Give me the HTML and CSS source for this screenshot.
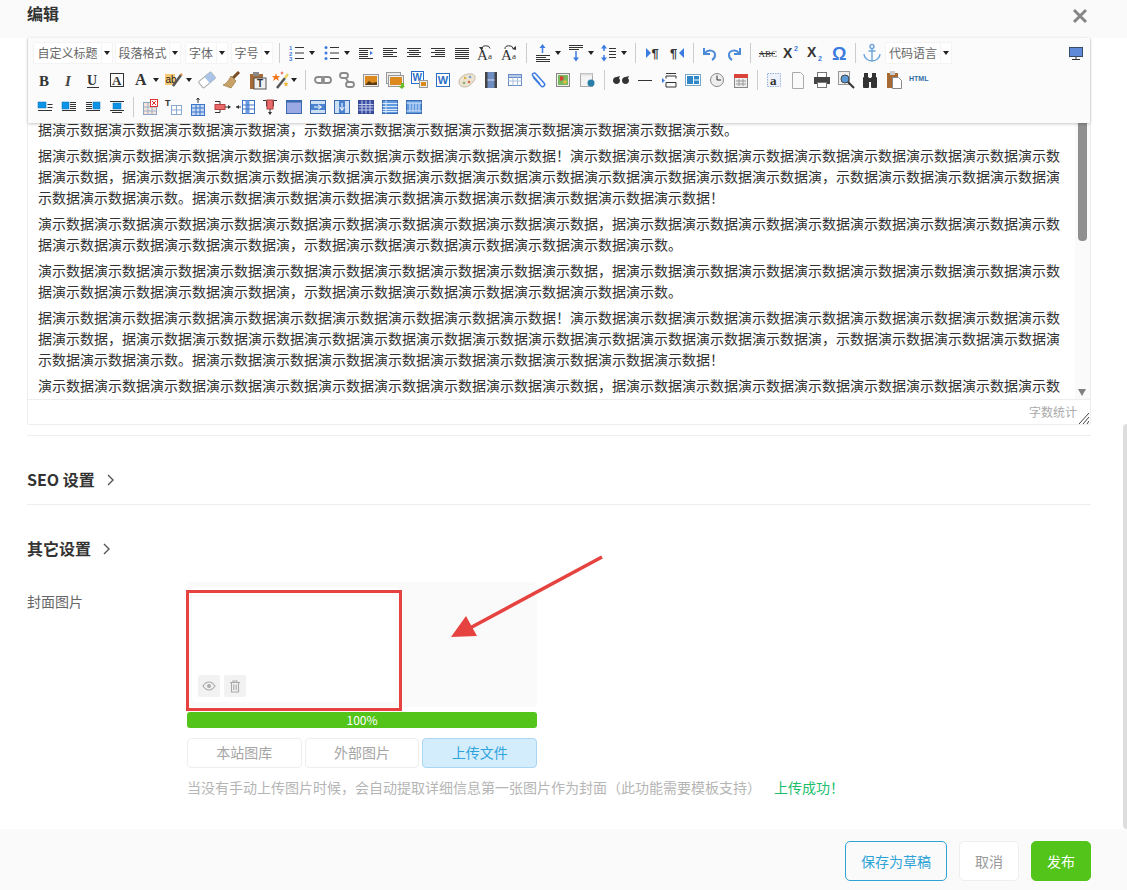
FILE: index.html
```html
<!DOCTYPE html>
<html lang="zh-CN">
<head>
<meta charset="utf-8">
<title>编辑</title>
<link rel="stylesheet" href="styles.css">
</head>
<body>
<header class="head">
  <h1 class="head-title">编辑</h1>
  <svg class="close" viewBox="0 0 16 16"><path d="M2 2l12 12M14 2L2 14"/></svg>
</header>
<main class="main">
  <section class="editor">
    <div class="toolbar">
      <div class="row">
        <div class="combo w1"><span class="combo-label">自定义标题</span><span class="caret"></span></div>
        <div class="combo w2"><span class="combo-label">段落格式</span><span class="caret"></span></div>
        <div class="combo w3"><span class="combo-label">字体</span><span class="caret"></span></div>
        <div class="combo w4"><span class="combo-label">字号</span><span class="caret"></span></div>
        <span class="sep sep12"></span>
        <svg class="i" viewBox="0 0 20 20"><text class="num" x="2" y="6.5">1</text><text class="num" x="2" y="12.5">2</text><text class="num" x="2" y="18">3</text><path class="s" d="M8 4.5h9M8 10h9M8 15.5h9"/></svg><span class="caret wide"></span>
        <svg class="i" viewBox="0 0 20 20"><circle class="fb" cx="4" cy="4.5" r="1.5"/><circle class="fb" cx="4" cy="10" r="1.5"/><circle class="fb" cx="4" cy="15.5" r="1.5"/><path class="s" d="M8 4.5h9M8 10h9M8 15.5h9"/></svg><span class="caret mid"></span>
        <svg class="i" viewBox="0 0 20 20"><path class="s" d="M3 5.5h14M3 7.5h9M3 9.5h9M3 11.5h9M3 13.5h9M3 15.5h14"/><path class="fb" d="M14 8l3 2-3 2z"/></svg>
        <svg class="i" viewBox="0 0 20 20"><path class="s" d="M3 5.5h14M3 7.5h10M3 9.5h14M3 11.5h10M3 13.5h14"/></svg>
        <svg class="i" viewBox="0 0 20 20"><path class="s" d="M3 5.5h14M5 7.5h10M3 9.5h14M5 11.5h10M3 13.5h14"/></svg>
        <svg class="i" viewBox="0 0 20 20"><path class="s" d="M3 5.5h14M7 7.5h10M3 9.5h14M7 11.5h10M3 13.5h14"/></svg>
        <svg class="i" viewBox="0 0 20 20"><path class="s" d="M3 5.5h14M3 7.5h14M3 9.5h14M3 11.5h14M3 13.5h14M3 15.5h14"/></svg>
        <svg class="i" viewBox="0 0 20 20"><text class="serif" x="1" y="17" font-size="15">A</text><text class="serif" x="12" y="16" font-size="9">a</text><path class="s" d="M6 6a4 3 0 0 1 8-.5"/><path class="f" d="M3 4l4 0-1 4z"/></svg>
        <svg class="i" viewBox="0 0 20 20"><text class="serif" x="1" y="17" font-size="15">A</text><text class="serif" x="12" y="16" font-size="9">a</text><path class="s" d="M5 6a4 3 0 0 1 8-.5"/><path class="f" d="M16 3l0 4-4-1z"/></svg>
        <span class="sep"></span>
        <svg class="i" viewBox="0 0 20 20"><path class="sb" d="M9.5 4v6"/><path class="fb" d="M9.5 1l3 4h-6z"/><path class="s" d="M3 12.5h14M3 14.5h10M3 16.5h14M3 18.5h14"/></svg><span class="caret"></span>
        <svg class="i" viewBox="0 0 20 20"><path class="s" d="M3 2.5h14M3 4.5h14M3 6.5h10"/><path class="sb" d="M10 8v7"/><path class="fb" d="M10 18.500l3-4H7z"/></svg><span class="caret"></span>
        <svg class="i" viewBox="0 0 20 20"><path class="sb" d="M5 5v3M5 12v3"/><path class="fb" d="M5 1.500l3 4H2zM5 18.500l3-4H2z"/><path class="s" d="M10 5.500h7M10 8.500h7M10 11.500h7M10 14.500h7"/></svg><span class="caret"></span>
        <span class="sep sep11"></span>
        <svg class="i" viewBox="0 0 20 20"><path class="fb" d="M3 5l5 5-5 5z"/><text class="sans-b" x="8.500" y="15" font-size="13">¶</text></svg>
        <svg class="i" viewBox="0 0 20 20"><text class="sans-b" x="3" y="15" font-size="13">¶</text><path class="fb" d="M17 5l-5 5 5 5z"/></svg>
        <span class="sep"></span>
        <svg class="i" viewBox="0 0 20 20"><path class="arrow-s" d="M4 5v6h6M5 10c3-4 10-3 10 2 0 2-1 4-3 5"/></svg>
        <svg class="i" viewBox="0 0 20 20"><path class="arrow-s" d="M16 5v6h-6M15 10c-3-4-10-3-10 2 0 2 1 4 3 5"/></svg>
        <span class="sep"></span>
        <svg class="i" viewBox="0 0 20 20"><text class="serif" x="1.500" y="13.500" font-size="9">ABC</text><path class="s" d="M2 10.500h16"/></svg>
        <svg class="i" viewBox="0 0 20 20"><text class="sans-b" x="2" y="15" font-size="14">X</text><text class="tiny-b" x="13" y="8">2</text></svg>
        <svg class="i" viewBox="0 0 20 20"><text class="sans-b" x="2" y="14" font-size="14">X</text><text class="tiny-b" x="13" y="18">2</text></svg>
        <svg class="i" viewBox="0 0 20 20"><text class="omega" x="3" y="16.500" font-size="18">Ω</text></svg>
        <span class="sep"></span>
        <svg class="i" viewBox="0 0 20 20"><circle class="anchor" cx="10" cy="3.500" r="2"/><path class="anchor" d="M10 5.500V18M6.500 8h7M2 11c0 4 4 7 8 7s8-3 8-7"/></svg>
        <div class="combo w5"><span class="combo-label">代码语言</span><span class="caret"></span></div>
        <svg class="i end" viewBox="0 0 20 20"><rect x="3.500" y="4.500" width="13" height="9" fill="#5f8ad8" stroke="#3a4a6a"/><path class="s" d="M10 14v2M6 16.500h8"/></svg>
      </div>
      <div class="row">
        <svg class="i" viewBox="0 0 20 20"><text class="serif-b" x="4" y="15.500" font-size="15">B</text></svg>
        <svg class="i" viewBox="0 0 20 20"><text class="serif-i" x="6" y="15.500" font-size="15">I</text></svg>
        <svg class="i" viewBox="0 0 20 20"><text class="serif-b" x="4" y="14.500" font-size="14">U</text><path class="s" d="M4 17.500h12"/></svg>
        <svg class="i" viewBox="0 0 20 20"><rect class="s" x="3.500" y="3.500" width="13" height="13"/><text class="serif-b" x="5" y="15" font-size="13">A</text></svg>
        <svg class="i" viewBox="0 0 20 20"><text class="serif-b" x="4" y="15" font-size="16">A</text></svg><span class="caret"></span>
        <svg class="i" viewBox="0 0 20 20"><rect x="1" y="4" width="10" height="11" fill="#f5c873"/><text class="sans" x="1.500" y="13" font-size="10">ab</text><path d="M9 16L17 5" stroke="#555" stroke-width="2.500"/><path d="M17 5l1-1" stroke="#e09030" stroke-width="2.500"/></svg><span class="caret"></span>
        <svg class="i" viewBox="0 0 20 20"><g transform="rotate(-40 10 10)"><rect x="2" y="6" width="16" height="8" rx="1" fill="#fff" stroke="#aaa"/><rect x="10" y="6" width="8" height="8" fill="#a9c4e8"/></g></svg>
        <svg class="i" viewBox="0 0 20 20"><path d="M12 8l6-6" stroke="#7a4a20" stroke-width="3"/><path d="M10 6l5 5-5 7-8-3c3-1 6-5 8-9z" fill="#c8a266" stroke="#8c6a36" stroke-width=".6"/></svg>
        <svg class="i shift" viewBox="0 0 20 20"><rect x="3" y="4" width="13" height="15" fill="#a86a34"/><rect x="6" y="2" width="6" height="4" fill="#888"/><rect x="7" y="8" width="12" height="11" fill="#f0f0f0" stroke="#555"/><text class="sans-b" x="10" y="17" font-size="10">T</text></svg>
        <svg class="i shift" viewBox="0 0 20 20"><path d="M6 18l8-10" stroke="#555" stroke-width="2.500"/><path d="M14 8l3-4" stroke="#f0d060" stroke-width="2.500"/><path d="M5 3l1 3h3L7 8l1 3-3-2-3 2 1-3-2-2h3z" fill="#f07a20"/><path d="M15 11l.6 2 2 .2-1.500 1.200.5 2-1.600-1-1.600 1 .5-2-1.400-1.200 2-.2z" fill="#f0b030"/><path d="M11 1l.5 1.500L13 3l-1.500.5L11 5l-.5-1.500L9 3l1.500-.5z" fill="#e04030"/></svg><span class="caret"></span>
        <span class="sep sep11"></span>
        <svg class="i" viewBox="0 0 20 20"><rect class="chain" x="2" y="7" width="9" height="6" rx="3"/><rect class="chain" x="9" y="7" width="9" height="6" rx="3"/></svg>
        <svg class="i" viewBox="0 0 20 20"><rect class="chain" x="3" y="3" width="8" height="5" rx="2.500"/><rect class="chain" x="9" y="12" width="8" height="5" rx="2.500"/><path class="chain" d="M9 8c0 2 2 2 2 4"/></svg>
        <svg class="i" viewBox="0 0 20 20"><rect x="2.500" y="4.500" width="15" height="12" fill="#eee" stroke="#999"/><rect x="4" y="6" width="12" height="9" fill="#dc8a1e"/><path d="M4 15l4-4 3 2 5-1v3z" fill="#5a3a10"/></svg>
        <svg class="i" viewBox="0 0 20 20"><rect x="1.500" y="2.500" width="14" height="11" fill="#eee" stroke="#999"/><rect x="3.500" y="5.500" width="15" height="11" fill="#eee" stroke="#999"/><rect x="5" y="7" width="12" height="8" fill="#dc8a1e"/><path d="M16 13h3v3h-3z" fill="#6ab82c"/><path d="M13 16l4 3 3-3z" fill="#6ab82c"/></svg>
        <svg class="i" viewBox="0 0 20 20"><rect x="2.500" y="1.500" width="12" height="12" fill="#fff" stroke="#2a6ec8"/><text class="word" x="3.500" y="11" font-size="10">W</text><rect x="10.500" y="10.500" width="8" height="7" fill="#eee" stroke="#999"/><rect x="12" y="12" width="5" height="4" fill="#dc8a1e"/></svg>
        <svg class="i" viewBox="0 0 20 20"><rect x="3.500" y="3.500" width="13" height="13" fill="#fff" stroke="#2a6ec8"/><text class="word" x="4.800" y="14" font-size="11">W</text></svg>
        <svg class="i" viewBox="0 0 20 20"><path d="M2 12c0-6 8-9 13-8 4 1 4 5 1 8-2 2-4 5-8 5-3 0-6-1-6-5z" fill="#ece4d0" stroke="#c4bca8"/><circle cx="8" cy="8" r="1.300" fill="#d9b04a"/><circle cx="13" cy="7" r="1.300" fill="#7aa0d0"/><circle cx="12" cy="12" r="1.300" fill="#d06a4a"/><circle cx="7" cy="13" r="1.300" fill="#8ab070"/></svg>
        <svg class="i" viewBox="0 0 20 20"><rect x="4" y="2" width="12" height="16" fill="#6f8dc0"/><rect x="4" y="2" width="2.500" height="16" fill="#444"/><rect x="13.500" y="2" width="2.500" height="16" fill="#444"/><path d="M6.500 10h7" stroke="#dde"/></svg>
        <svg class="i" viewBox="0 0 20 20"><rect x="3.500" y="4.500" width="13" height="11" fill="#fff" stroke="#6a8fc8"/><rect x="3.500" y="4.500" width="13" height="3" fill="#b8cbe6" stroke="#6a8fc8"/><path d="M3.500 11h13M8 7.500v8M12.500 7.500v8" stroke="#a8c0e0"/></svg>
        <svg class="i" viewBox="0 0 20 20"><path d="M4 7l8 9c2 2 5-1 3-3L7 4C5 2 2 4 4 6l7 8" fill="none" stroke="#3c7ce0" stroke-width="1.500"/></svg>
        <svg class="i" viewBox="0 0 20 20"><rect x="3.500" y="3.500" width="13" height="13" fill="#f0f0e8" stroke="#888"/><rect x="5" y="5" width="10" height="10" fill="#7ab860"/><path d="M7 6l4 1-1 3-3 1z" fill="#d84030"/><path d="M11 10l3 1-1 3-3-1z" fill="#e0c040"/></svg>
        <svg class="i" viewBox="0 0 20 20"><rect x="3.500" y="3.500" width="12" height="13" fill="#f4f4f4" stroke="#aaa"/><rect x="3.500" y="3.500" width="12" height="2" fill="#ddd"/><circle cx="14" cy="13" r="3.500" fill="#2a7fa8"/></svg>
        <span class="sep sep10"></span>
        <svg class="i" viewBox="0 0 20 20"><path class="f" d="M5.500 7c-2 0-3.500 1.500-3.500 3.500S3.500 14 5.500 14 9 12.500 9 10.500c0-1-.5-1.500-1-2L9 6zM14.500 7c-2 0-3.500 1.500-3.500 3.500s1.500 3.500 3.500 3.500 3.500-1.500 3.500-3.500c0-1-.5-1.500-1-2l1-2.500z"/></svg>
        <svg class="i" viewBox="0 0 20 20"><path class="s" d="M3 10.500h14"/></svg>
        <svg class="i" viewBox="0 0 20 20"><path class="s" d="M7 3.500h10M7 8.500V6h10v2.500M7 12.500h10V17H7z"/><path class="fb" d="M3 8v5l3-2.500z"/></svg>
        <svg class="i" viewBox="0 0 20 20"><rect x="2.500" y="4.500" width="15" height="11" fill="#fff" stroke="#7aa4c4"/><rect x="4" y="6" width="6" height="8" fill="#2f86c8"/><rect x="11" y="6" width="5" height="3.500" fill="#2f86c8"/><rect x="11" y="10.500" width="5" height="3.500" fill="#2f86c8"/></svg>
        <svg class="i" viewBox="0 0 20 20"><circle cx="10" cy="10" r="6.500" fill="#eee" stroke="#888"/><path class="s" d="M10 5.500V10h4"/></svg>
        <svg class="i" viewBox="0 0 20 20"><rect x="3.500" y="4.500" width="13" height="13" fill="#eee" stroke="#888"/><rect x="3" y="4" width="14" height="4" fill="#d9433a"/><path d="M5 11h10M5 14h10M8 9v7M12 9v7" stroke="#999"/></svg>
        <span class="sep"></span>
        <svg class="i" viewBox="0 0 20 20"><rect x="3.500" y="3.500" width="13" height="13" fill="#eef2fc" stroke="#9ab4e0" stroke-dasharray="1.500 1"/><text class="serif-b" x="6" y="14.500" font-size="13">a</text></svg>
        <svg class="i" viewBox="0 0 20 20"><path d="M4.500 2.500h8l3 3v13h-11z" fill="#fafafa" stroke="#aaa"/></svg>
        <svg class="i" viewBox="0 0 20 20"><rect x="5.500" y="2.500" width="9" height="5" fill="#fff" stroke="#777"/><rect x="2" y="7" width="16" height="7" fill="#444"/><rect x="5.500" y="12.500" width="9" height="5" fill="#fff" stroke="#777"/></svg>
        <svg class="i" viewBox="0 0 20 20"><rect x="2.500" y="1.500" width="11" height="13" fill="#eee" stroke="#999"/><circle cx="9" cy="9" r="4" fill="#5a9ad8" stroke="#444"/><path d="M12 12l6 6" stroke="#333" stroke-width="2"/></svg>
        <svg class="i" viewBox="0 0 20 20"><rect class="f" x="3" y="7" width="6" height="11" rx="1"/><rect class="f" x="11" y="7" width="6" height="11" rx="1"/><rect class="f" x="4" y="3" width="4" height="5"/><rect class="f" x="12" y="3" width="4" height="5"/><rect class="f" x="8" y="8" width="4" height="4"/></svg>
        <svg class="i" viewBox="0 0 20 20"><rect x="3" y="3" width="11" height="15" fill="#a86a34"/><rect x="6" y="1" width="5" height="4" fill="#ccc"/><path d="M8.500 7.500h6l3 3v8h-9z" fill="#fff" stroke="#888"/></svg>
        <svg class="i" viewBox="0 0 20 20"><text class="html" x="1" y="11" font-size="7">HTML</text></svg>
      </div>
      <div class="row">
        <svg class="i" viewBox="0 0 20 20"><rect class="ab" x="3" y="5" width="8" height="6"/><path class="s" d="M12.500 7.500h5M12.500 10.500h5M3 13.500h14"/></svg>
        <svg class="i" viewBox="0 0 20 20"><rect class="ab" x="3" y="5" width="7" height="7"/><path class="s" d="M11 5.500h6M11 7.500h6M11 9.500h6M11 11.500h6M3 13.500h14"/></svg>
        <svg class="i" viewBox="0 0 20 20"><rect class="ab" x="10" y="5" width="7" height="7"/><path class="s" d="M3 5.500h6M3 7.500h6M3 9.500h6M3 11.500h6M3 13.500h14"/></svg>
        <svg class="i" viewBox="0 0 20 20"><path class="s" d="M3 4.500h14M3 13.500h14M5 15.500h10"/><rect class="ab" x="6" y="6" width="8" height="6"/></svg>
        <span class="sep"></span>
        <svg class="i" viewBox="0 0 20 20"><rect x="3.500" y="5.500" width="13" height="12" fill="#f8e4d8" stroke="#8aa4c4"/><path d="M3.500 10h13M3.500 14h13M8 5.500v12M12 5.500v12" stroke="#9ab0cc"/><rect x="10.500" y="2.500" width="7" height="7" fill="#fff" stroke="#e03030"/><path d="M12 4l4 4M16 4l-4 4" stroke="#e03030"/></svg>
        <svg class="i" viewBox="0 0 20 20"><text class="sans-b" x="1" y="9" font-size="9">T</text><rect x="7.500" y="8.500" width="10" height="9" fill="#fff" stroke="#8aa8d0"/><path d="M7.500 13h10M12.500 8.500v9" stroke="#8aa8d0"/></svg>
        <svg class="i" viewBox="0 0 20 20"><path class="s" d="M10 1v5M8.500 3L10 1l1.500 2"/><rect x="3.500" y="7.500" width="13" height="11" fill="#c4d8f4" stroke="#3c74c8"/><path d="M3.500 11h13M3.500 15h13M8 7.500v11M12 7.500v11" stroke="#3c74c8"/></svg>
        <svg class="i" viewBox="0 0 20 20"><path class="s" d="M3 4.500h5v3M3 15.500h5v-3"/><rect x="3" y="7.500" width="10" height="5" fill="#e86a6a" stroke="#b84040"/><path class="s" d="M13 10h5"/><path class="f" d="M16 8l3 2-3 2z"/></svg>
        <svg class="i" viewBox="0 0 20 20"><rect x="6.500" y="3.500" width="12" height="13" fill="#fff" stroke="#3c74c8"/><rect x="9.500" y="3.500" width="4" height="13" fill="#6a9ae0"/><path d="M6.500 8h12M6.500 12h12" stroke="#3c74c8"/><path class="s" d="M0 10h5"/><path class="f" d="M3 8l-3 2 3 2z"/></svg>
        <svg class="i" viewBox="0 0 20 20"><path class="s" d="M3 3.500h3.500v6M17 3.500h-3.500v6"/><rect x="7" y="3" width="6" height="9" fill="#e86a6a" stroke="#b84040"/><path class="s" d="M10 12v5"/><path class="f" d="M8 15l2 3 2-3z"/></svg>
        <svg class="i" viewBox="0 0 20 20"><rect x="2.500" y="3.500" width="15" height="13" fill="#9aa8e4" stroke="#3a6bb0"/><rect x="2.500" y="3.500" width="15" height="2" fill="#3a6bb0"/></svg>
        <svg class="i" viewBox="0 0 20 20"><rect x="2.500" y="3.500" width="15" height="13" fill="#cfe0f5" stroke="#3a6bb0"/><rect x="3" y="7" width="14" height="6" fill="#4a84d0"/><path d="M6 10h7M10 7.800l3.500 2.200-3.500 2.200" fill="none" stroke="#fff"/></svg>
        <svg class="i" viewBox="0 0 20 20"><rect x="2.500" y="3.500" width="15" height="13" fill="#cfe0f5" stroke="#3a6bb0"/><rect x="7" y="4" width="6" height="12" fill="#4a84d0"/><path d="M10 6v7M7.800 10L10 13.500 12.200 10" fill="none" stroke="#fff"/></svg>
        <svg class="i" viewBox="0 0 20 20"><rect x="2.500" y="3.500" width="15" height="13" fill="#3b4fa8" stroke="#34468f"/><path d="M2.500 7.500h15M2.500 10h15M2.500 13h15M6 3.500v13M10 3.500v13M14 3.500v13" stroke="#c4cce8"/></svg>
        <svg class="i" viewBox="0 0 20 20"><rect x="2.500" y="3.500" width="15" height="13" fill="#5f9ae0" stroke="#3a6bb0"/><path d="M2.500 6.500h15M2.500 9.500h15M2.500 12.500h15M2.500 14.500h15M6 3.500v13" stroke="#dbe8f8"/></svg>
        <svg class="i" viewBox="0 0 20 20"><rect x="2.500" y="3.500" width="15" height="13" fill="#5f9ae0" stroke="#3a6bb0"/><path d="M2.500 6h15M2.500 14h15M6 6v8M9 6v8M12 6v8M15 6v8" stroke="#dbe8f8"/></svg>
      </div>
    </div>
    <div class="edit">
      <div class="edit-text">
        <p class="clip">据演示数据演示数据演示数据演示数据演，示数据演示数据演示数据演示数据演示数据演示数据演示数据演示数。</p>
        <p>据演示数据演示数据演示数据演示数据演示数据演示数据演示数据演示数据演示数据！演示数据演示数据演示数据演示数据演示数据演示数据演示数据演示数据演示数据演示数据，据演示数据演示数据演示数据演示数据演示数据演示数据演示数据演示数据演示数据演示数据演示数据演示数据演，示数据演示数据演示数据演示数据演示数据演示数据演示数。据演示数据演示数据演示数据演示数据演示数据演示数据演示数据演示数据演示数据！</p>
        <p>演示数据演示数据演示数据演示数据演示数据演示数据演示数据演示数据演示数据演示数据，据演示数据演示数据演示数据演示数据演示数据演示数据演示数据演示数据演示数据演示数据演示数据演示数据演，示数据演示数据演示数据演示数据演示数据演示数据演示数。</p>
        <p>演示数据演示数据演示数据演示数据演示数据演示数据演示数据演示数据演示数据演示数据，据演示数据演示数据演示数据演示数据演示数据演示数据演示数据演示数据演示数据演示数据演示数据演示数据演，示数据演示数据演示数据演示数据演示数据演示数据演示数。</p>
        <p>据演示数据演示数据演示数据演示数据演示数据演示数据演示数据演示数据演示数据！演示数据演示数据演示数据演示数据演示数据演示数据演示数据演示数据演示数据演示数据，据演示数据演示数据演示数据演示数据演示数据演示数据演示数据演示数据演示数据演示数据演示数据演示数据演，示数据演示数据演示数据演示数据演示数据演示数据演示数。据演示数据演示数据演示数据演示数据演示数据演示数据演示数据演示数据演示数据！</p>
        <p>演示数据演示数据演示数据演示数据演示数据演示数据演示数据演示数据演示数据演示数据，据演示数据演示数据演示数据演示数据演示数据演示数据演示数据演示数据演示数据演示数据演示数据演示数据演，示数据演示数据演示数据演示数据演示数据演示数据演示数。</p>
      </div>
      <div class="track"><span class="thumb"></span><span class="down"></span></div>
    </div>
    <div class="status">
      <span>字数统计</span>
      <svg class="grip" viewBox="0 0 10 12"><path d="M0 12L10 1M4 12l6-7M8 12l2-3"/></svg>
    </div>
  </section>

  <section class="sec sec-seo">
    <h2 class="sec-title">SEO 设置<svg class="chev" viewBox="0 0 8 12"><path d="M1 1l5 5-5 5"/></svg></h2>
  </section>
  <section class="sec-other">
    <h2 class="sec-title">其它设置<svg class="chev" viewBox="0 0 8 12"><path d="M1 1l5 5-5 5"/></svg></h2>
  </section>

  <div class="form-row">
    <label class="form-label">封面图片</label>
    <div class="upload">
      <div class="drop">
        <div class="thumb-card">
          <span class="tool"><svg viewBox="0 0 14 14"><path class="eye" d="M1 7c2-3 4-4 6-4s4 1 6 4c-2 3-4 4-6 4S3 10 1 7z"/><circle class="eye-dot" cx="7" cy="7" r="2"/></svg></span>
          <span class="tool"><svg viewBox="0 0 14 14"><path class="can" d="M2 3.500h10M5 3.500V2h4v1.500M3.500 3.500V13h7V3.500M5.800 5.500v5.500M8.200 5.500v5.500"/></svg></span>
        </div>
      </div>
      <div class="progress">100%</div>
      <div class="tabs">
        <span class="tab">本站图库</span>
        <span class="tab">外部图片</span>
        <span class="tab active">上传文件</span>
      </div>
      <p class="tip">当没有手动上传图片时候，会自动提取详细信息第一张图片作为封面（此功能需要模板支持）<span class="ok">上传成功！</span></p>
      <svg class="mark" viewBox="0 0 430 165"><rect x="1.500" y="41.500" width="213" height="118"/><path class="mark-line" d="M416 7L284 78"/><path class="mark-head" d="M265 87l15-21 11 20z"/></svg>
    </div>
  </div>
  <span class="page-bar"></span>
</main>
<footer class="foot">
  <button class="btn btn-draft">保存为草稿</button>
  <button class="btn btn-cancel">取消</button>
  <button class="btn btn-pub">发布</button>
</footer>
</body>
</html>
```
FILE: styles.css
```css
* { box-sizing: border-box; }
html, body { margin: 0; height: 100%; }
body {
  height: 890px;
  overflow: hidden;
  display: flex;
  flex-direction: column;
  background: #fff;
  color: #333;
  font-family: "Noto Sans CJK SC", "Open Sans", sans-serif;
  font-size: 14px;
}
.head {
  height: 38px;
  flex: none;
  display: flex;
  justify-content: space-between;
  align-items: flex-start;
  padding: 1px 39px 0 27px;
  background: #fafafa;
}
.head-title { margin: 0; font-size: 16px; line-height: 24px; font-weight: 700; color: #333; }
.close { width: 16px; height: 16px; margin-top: 7px; }
.close path { fill: none; stroke: #868686; stroke-width: 3; }

.main { position: relative; flex: 1; min-height: 0; padding: 0 36px 0 27px; }
.editor { border: 1px solid #eee; border-top: 0; border-radius: 0 0 3px 3px; margin-bottom: 10px; }

.toolbar {
  position: relative;
  z-index: 2;
  height: 85px;
  padding: 1px 2px 2px 5px;
  background: #fbfbfb;
  box-shadow: 0 1px 3px rgba(0, 0, 0, .22);
}
.row { height: 27px; display: flex; align-items: center; }
.i { flex: none; width: 20px; height: 20px; margin: 0 2px; overflow: visible; }
.i.end { margin-left: auto; }
.i.shift { transform: translateX(2px); }

.combo {
  flex: none;
  height: 22px;
  display: flex;
  align-items: center;
  font-size: 12px;
  color: #666;
}
.combo-label {
  flex: 1;
  height: 22px;
  line-height: 20px;
  text-align: center;
  background: #fff;
  border: 1px solid #f4f4f4;
  border-radius: 2px;
  white-space: nowrap;
}
.combo .caret { width: 11px; justify-content: center; background: #fff; height: 22px; border: 1px solid #f4f4f4; border-left: 0; }
.w1 { width: 80px; margin-right: 2px; }
.w2 { width: 66px; margin-right: 4px; }
.w3 { width: 43px; margin-right: 3px; }
.w4 { width: 42px; }
.w5 { width: 67px; margin-left: 1px; }

.caret { flex: none; width: 9px; display: flex; align-items: center; }
.caret.wide { width: 11px; }
.caret.mid { width: 10px; }
.caret::before {
  content: "";
  border-left: 3.5px solid transparent;
  border-right: 3.5px solid transparent;
  border-top: 4px solid #222;
}
.sep { flex: none; width: 9px; height: 20px; display: flex; justify-content: center; }
.sep::before { content: ""; width: 1px; background: #ccc; }
.sep12 { width: 12px; }
.sep11 { width: 11px; }
.sep10 { width: 10px; }

.s { fill: none; stroke: #333; stroke-width: 1; }
.sb { fill: none; stroke: #3c7ce0; stroke-width: 1.5; }
.f { fill: #333; }
.fb { fill: #3c7ce0; }
.ab { fill: #0c93e6; stroke: #0a70b8; stroke-width: .5; }
.arrow-s { fill: none; stroke: #4a8ad8; stroke-width: 2; }
.anchor { fill: none; stroke: #6aa4dc; stroke-width: 1.4; }
.chain { fill: none; stroke: #8a8a8a; stroke-width: 1.8; }
.num { font: 700 6px "Liberation Sans", sans-serif; fill: #3c7ce0; }
.serif { font-family: "Liberation Serif", serif; fill: #333; }
.serif-b { font-family: "Liberation Serif", serif; font-weight: 700; fill: #333; }
.serif-i { font-family: "Liberation Serif", serif; font-style: italic; font-weight: 700; fill: #444; }
.sans { font-family: "Liberation Sans", sans-serif; fill: #222; }
.sans-b { font-family: "Liberation Sans", sans-serif; font-weight: 700; fill: #333; }
.tiny-b { font: 700 7px "Liberation Sans", sans-serif; fill: #3c7ce0; }
.omega { font-family: "Liberation Sans", sans-serif; font-weight: 700; fill: #3c7ce0; }
.word { font-family: "Liberation Sans", sans-serif; font-weight: 700; fill: #2a6ec8; }
.html { font-family: "Liberation Sans", sans-serif; font-weight: 700; fill: #2f6ca8; }

.edit { height: 276px; display: flex; overflow: hidden; }
.edit-text { flex: 1; min-width: 0; padding: 0 15px 0 10px; line-height: 21px; color: #333; }
.edit-text p { margin: 0 0 5px; }
.edit-text .clip { margin-top: -4px; }
.track { flex: none; width: 15px; position: relative; background: #fafafa; }
.thumb { display: block; width: 9px; height: 118px; margin-left: 3px; background: #8f8f8f; border-radius: 0 0 4px 4px; }
.down {
  position: absolute;
  left: 3px;
  bottom: 3px;
  border-left: 4.5px solid transparent;
  border-right: 4.5px solid transparent;
  border-top: 7px solid #808080;
}
.status {
  height: 25px;
  border-top: 1px solid #eee;
  display: flex;
  justify-content: flex-end;
  align-items: center;
  gap: 2px;
  font-size: 12px;
  line-height: 20px;
  color: #aaa;
}
.grip { width: 10px; height: 12px; align-self: flex-end; margin-right: 1px; }
.grip path { fill: none; stroke: #444; stroke-width: 1; }

.sec-title {
  margin: 0;
  display: flex;
  align-items: center;
  gap: 12px;
  font-size: 16px;
  line-height: 24px;
  font-weight: 700;
  color: #333;
}
.chev { width: 8px; height: 12px; margin-top: 1px; }
.chev path { fill: none; stroke: #555; stroke-width: 1.4; }
.sec { border-top: 1px solid #eee; border-bottom: 1px solid #eee; }
.sec-seo { padding: 31px 0 13px; }
.sec-other { padding-top: 31px; margin-bottom: 22px; }

.form-row { display: flex; align-items: flex-start; }
.form-label { flex: none; width: 160px; padding-top: 8px; line-height: 22px; color: #666; }
.upload { position: relative; flex: none; width: 350px; }
.drop { height: 125px; padding: 5px 139px 5px 5px; background: #fafafa; border-radius: 4px; }
.thumb-card {
  height: 115px;
  padding: 0 0 5px 6px;
  display: flex;
  align-items: flex-end;
  gap: 4px;
  background: #fff;
  border-radius: 4px;
}
.tool {
  width: 22px;
  height: 22px;
  display: flex;
  align-items: center;
  justify-content: center;
  background: #f2f2f2;
  border-radius: 2px;
}
.tool svg { width: 14px; height: 14px; }
.eye { fill: none; stroke: #aaa; stroke-width: 1.2; }
.eye-dot { fill: #aaa; }
.can { fill: none; stroke: #aaa; stroke-width: 1.1; }
.progress {
  height: 16px;
  margin-top: 5px;
  background: #52c41a;
  border-radius: 3px;
  color: #fff;
  font-size: 12px;
  line-height: 16px;
  text-align: center;
}
.tabs { display: flex; gap: 3px; margin-top: 10px; }
.tab {
  flex: 1;
  height: 30px;
  line-height: 27px;
  text-align: center;
  color: #a5a5a5;
  background: #fff;
  border: 1px solid #eee;
  border-radius: 4px;
}
.tab.active { color: #2ea3dc; background: #d4edfc; border-color: #a9d6f2; }
.tip { margin: 9px 0 0; line-height: 20px; color: #b5b5b5; white-space: nowrap; }
.ok { margin-left: 13px; color: #19be6b; }
.mark { position: absolute; left: -1px; top: -32px; width: 430px; height: 165px; overflow: visible; pointer-events: none; }
.mark rect { fill: none; stroke: #e64340; stroke-width: 3; }
.mark-line { fill: none; stroke: #e64340; stroke-width: 3.5; }
.mark-head { fill: #e64340; }
.page-bar {
  position: absolute;
  right: 0;
  top: 386px;
  width: 4px;
  height: 405px;
  background: #ddd;
  border-radius: 4px 0 0 4px;
}

.foot {
  flex: none;
  height: 61px;
  display: flex;
  justify-content: flex-end;
  align-items: flex-start;
  gap: 12px;
  padding: 12px 36px 0 0;
  background: #fafafa;
}
.btn {
  height: 40px;
  width: 60px;
  padding: 0 0 1px;
  border-radius: 5px;
  font: 14px "Noto Sans CJK SC", sans-serif;
  background: #fff;
  border: 1px solid #eee;
  color: #999;
}
.btn-draft { width: 102px; background: #fafafa; border-color: #2ea3d6; color: #2ea3d6; }
.btn-pub { background: #52c41a; border-color: #52c41a; color: #fff; }
```
